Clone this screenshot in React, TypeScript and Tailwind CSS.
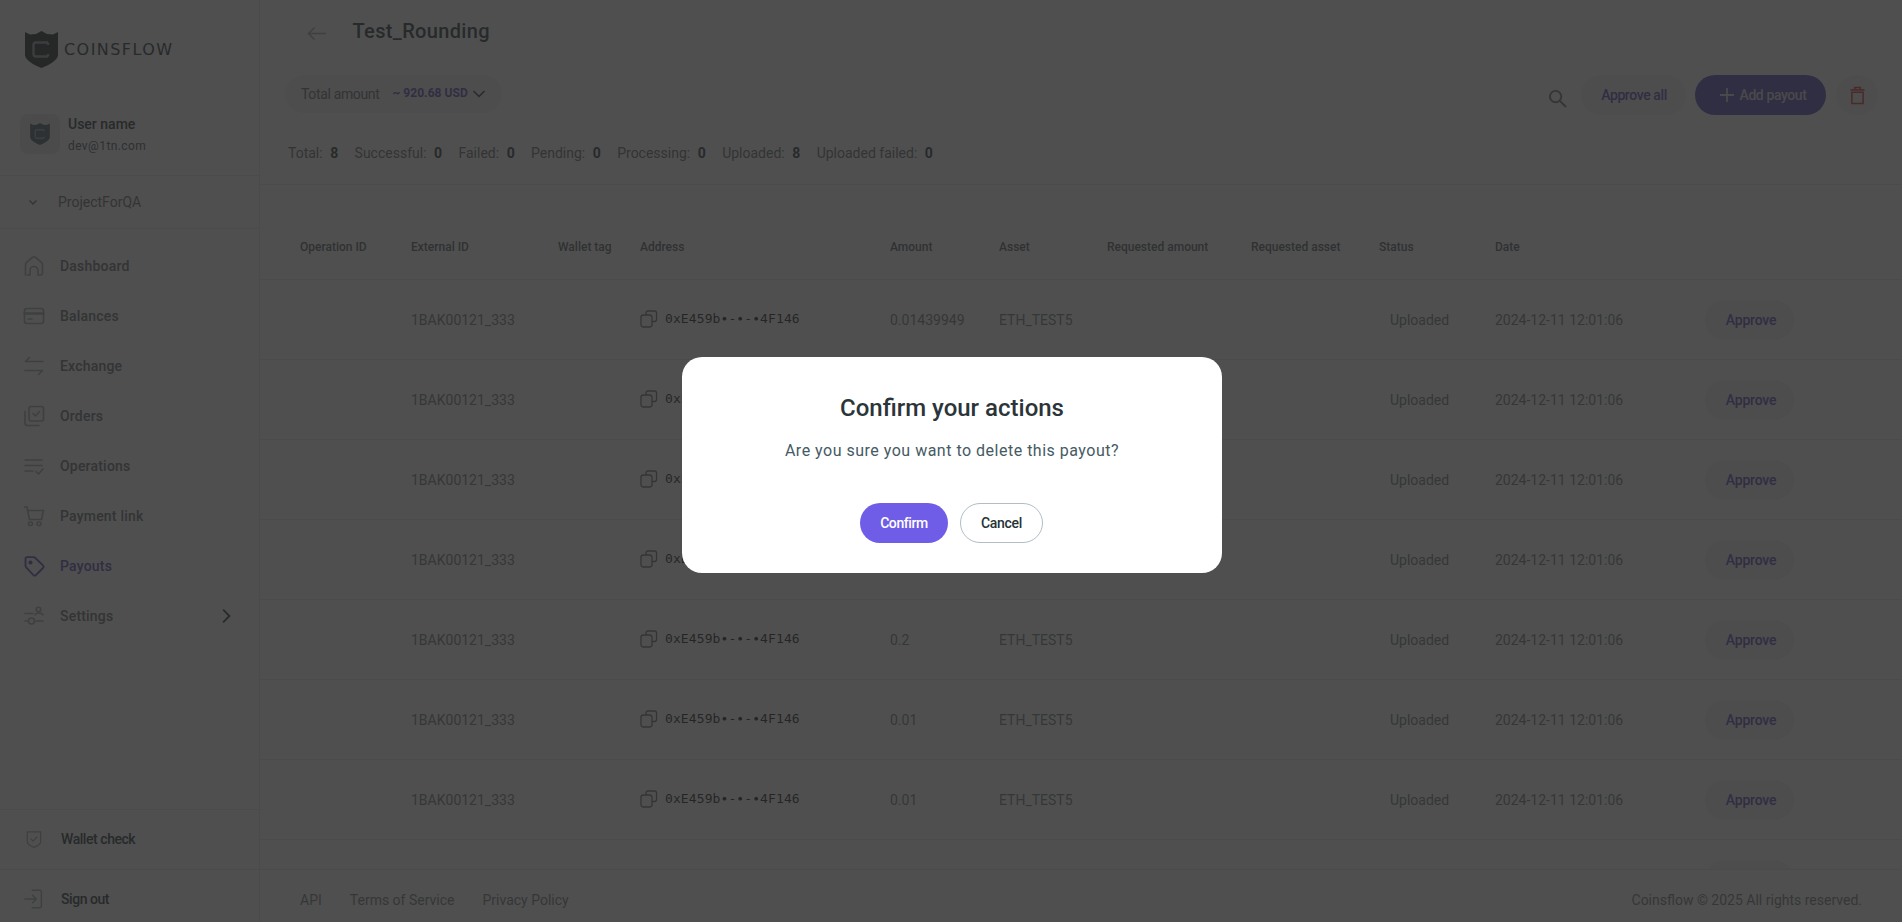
import React from "react";

const P = (props: React.SVGProps<SVGSVGElement> & { s?: number }) => {
  const { s = 24, children, ...r } = props;
  return (
    <svg width={s} height={s} viewBox="0 0 24 24" fill="none" stroke="currentColor" strokeWidth={1.6} strokeLinecap="round" strokeLinejoin="round" {...r}>
      {children}
    </svg>
  );
};

const Shield = ({ w, h, fill, c }: { w: number; h: number; fill: string; c: string }) => (
  <svg width={w} height={h} viewBox="0 0 33 37">
    <path d="M0 1 L5 3.5 L11 3 L16.5 0 L22 3 L28 3.5 L33 1 V24 C33 29 24 34 16.5 37 C9 34 0 29 0 24 Z" fill={fill} />
    <path d="M23 11.500 H11 Q8.500 11.500 8.500 14 V23 Q8.500 25.500 11 25.500 H23 M23 11.500 V14 M23 25.500 V23" fill="none" stroke={c} strokeWidth="2.400" />
  </svg>
);

const nav: [string, React.ReactNode, boolean?][] = [
  ["Dashboard", <P><path d="M3.500 21 V10.500 C3.500 9.500 4 8.800 4.800 8.100 L10.500 3.300 C11.400 2.600 12.600 2.600 13.500 3.300 L19.200 8.100 C20 8.800 20.500 9.500 20.500 10.500 V19 C20.500 20.200 19.700 21 18.500 21 H16 V16.500 C16 14.300 14.200 12.500 12 12.500 C9.800 12.500 8 14.300 8 16.500 V21 H5.500" /></P>],
  ["Balances", <P><rect x="2.500" y="4.500" width="19" height="15" rx="2.500" /><path d="M2.500 9.500 H21.500" strokeWidth="2.400" /><path d="M6 15 H10" /></P>],
  ["Exchange", <P><path d="M7.500 3.500 L3.500 7.500 H21" /><path d="M16.500 20.500 L20.500 16.500 H3" /></P>],
  ["Orders", <P><rect x="7" y="2.500" width="14.500" height="14.500" rx="2" /><path d="M11 9.500 L13.500 12 L17.500 7.500" /><path d="M3 7.500 V19 C3 20.500 3.800 21.500 5.500 21.500 H17" /></P>],
  ["Operations", <P><path d="M3 6 H20 M3 11.500 H20 M3 17 H11" /><path d="M14 17.500 L16.500 20 L21 15" /></P>],
  ["Payment link", <P><path d="M2.500 3 H5 L7.500 15.500 H19.500 L21.500 6.500 H5.800" /><rect x="6.500" y="18" width="4" height="3.500" rx="1.700" /><rect x="15" y="18" width="4" height="3.500" rx="1.700" /></P>],
  ["Payouts", <P><path d="M3.500 5 C3.500 4 4.300 3.200 5.300 3.200 H11.500 C12.200 3.200 12.800 3.500 13.300 4 L21 11.300 C21.800 12.100 21.800 13.300 21 14 L14 21 C13.300 21.700 12.100 21.700 11.300 21 L4.200 13.400 C3.700 12.900 3.500 12.300 3.500 11.600 Z" strokeWidth="1.800" /><circle cx="8.500" cy="8.500" r="1.300" fill="currentColor" /></P>, true],
  ["Settings", <P><path d="M3 9.500 H11 M3 17 H6 M14 17 H21" /><path d="M13 11 C13.500 9.500 14.500 9 16.500 9 C18.500 9 20.500 9.500 21 11" strokeWidth="1.400" /><circle cx="16.500" cy="5.500" r="2.200" /><circle cx="9.500" cy="17" r="3" /></P>],
];

const Btn = ({ children, cls }: { children: React.ReactNode; cls: string }) => (
  <div className={"flex items-center justify-center rounded-full h-10 text-sm font-medium " + cls}>{children}</div>
);

const cols = "grid grid-cols-[111px_147px_82px_250px_109px_108px_144px_128px_116px_210px_1fr] pl-[40px] items-center";
const amounts = ["0.01439949", "0.05", "0.1", "0.3", "0.2", "0.01", "0.01", "0.01"];
const heads = ["Operation ID", "External ID", "Wallet tag", "Address", "Amount", "Asset", "Requested amount", "Requested asset", "Status", "Date"];
const stats: [string, string][] = [["Total", "8"], ["Successful", "0"], ["Failed", "0"], ["Pending", "0"], ["Processing", "0"], ["Uploaded", "8"], ["Uploaded failed", "0"]];

export default function App() {
  return (
    <div className="relative flex h-[922px] w-full overflow-hidden bg-white text-[#263238] text-sm" style={{ fontFamily: "Roboto, sans-serif" }}>
      <aside className="flex w-[260px] shrink-0 flex-col border-r border-[#e4e6e8] bg-[#fbfbfb]">
        <div className="flex h-[114px] items-start gap-[6px] pl-[25px] pt-[31px]">
          <Shield w={33} h={37} fill="#1d2326" c="#8d9a9f" />
          <span className="mt-[8px] text-[16px] leading-[22px] tracking-[1.45px] text-[#263238]" style={{ fontFamily: '"DejaVu Sans", sans-serif', fontWeight: 400 }}>COINSFLOW</span>
        </div>
        <div className="flex h-[62px] items-start gap-2 border-b border-[#e4e6e8] pl-5">
          <div className="flex h-10 w-10 items-center justify-center rounded-lg bg-[#e8e9ea]">
            <Shield w={20} h={22} fill="#455a64" c="#90a4ae" />
          </div>
          <div>
            <div className="text-sm font-medium leading-[20px] text-[#263238]">User name</div>
            <div className="mt-[2px] text-[12px] leading-[20px] tracking-[0.4px] text-[#4a5459]">dev@1tn.com</div>
          </div>
        </div>
        <div className="flex h-[53px] items-center border-b border-[#e4e6e8] pl-[26px] text-[#636b70]">
          <svg width="14" height="14" viewBox="0 0 14 14" fill="none" stroke="currentColor" strokeWidth="1.400"><path d="M3.500 5.500 L7 9 L10.500 5.500" /></svg>
          <span className="ml-[18px]">ProjectForQA</span>
        </div>
        <nav className="flex flex-col pt-[12px]">
          {nav.map(([t, ic, active]) => (
            <div key={t} className={"flex h-[50px] items-center pl-[22px] pr-[25px] " + (active ? "text-[#5648bd]" : "text-[#636b70]")}>
              <span className={active ? "" : "text-[#a0a8ac]"}>{ic}</span>
              <span className="ml-[14px] font-medium tracking-[0.2px]">{t}</span>
              {t === "Settings" && (
                <svg className="ml-auto text-[#263238]" width="16" height="16" viewBox="0 0 14 14" fill="none" stroke="currentColor" strokeWidth="1.600"><path d="M4.500 1.500 L10 7 L4.500 12.500" /></svg>
              )}
            </div>
          ))}
        </nav>
        <div className="mt-auto flex h-[60px] items-center border-t border-[#e4e6e8] pb-[1px] pl-[24px] font-medium tracking-[-0.45px]">
          <P s={20} className="text-[#a0a8ac]"><path d="M4 3.500 H20 V15.500 C20 18 15.500 20.500 12 22 C8.500 20.500 4 18 4 15.500 Z" strokeWidth="1.500" /><path d="M8.500 12 L11 14.500 L15.500 9.500" strokeWidth="1.300" /></P>
          <span className="ml-[17px]">Wallet check</span>
        </div>
        <div className="flex h-[53px] items-center border-t border-[#e4e6e8] pl-[23px] pt-[6px] font-medium tracking-[-0.45px]">
          <P s={22} className="text-[#a0a8ac]"><path d="M10 2.500 H18.500 C19.500 2.500 20 3 20 4 V20 C20 21 19.500 21.500 18.500 21.500 H10" strokeWidth="1.500" /><path d="M2 12 H14 M10.500 8 L14.500 12 L10.500 16" strokeWidth="1.500" /></P>
          <span className="ml-[16px]">Sign out</span>
        </div>
      </aside>

      <main className="flex min-w-0 flex-1 flex-col bg-white">
        <div className="flex h-[62px] items-center pl-[46px] pt-[3px]">
          <svg className="text-[#a0a8ac]" width="22" height="22" viewBox="0 0 22 22" fill="none" stroke="currentColor" strokeWidth="1.500"><path d="M20 11.500 H2.500 M8.500 5.500 L2.500 11.500 L8.500 17.500" /></svg>
          <h1 className="ml-[24.5px] -translate-y-[1px] text-[20px] font-medium tracking-[0.35px] text-[#263238]">Test_Rounding</h1>
        </div>
        <div className="mt-[13px] flex h-[40px] items-start justify-between pl-[25px] pr-[24px]">
          <div className="flex h-[38px] w-[217px] items-center rounded-full bg-[#f1f1f3] pl-[16px]">
            <span className="tracking-[-0.35px] text-[#5f686d]">Total amount</span>
            <span className="ml-[13px] text-[12px] font-bold tracking-[0.05px] text-[#5648bd]">~ 920.68 USD</span>
            <svg className="ml-[3px]" width="16" height="16" viewBox="0 0 16 16" fill="none" stroke="#263238" strokeWidth="1.500"><path d="M2.500 5 L8 10.500 L13.500 5" /></svg>
          </div>
          <div className="flex items-start">
            <svg className="mt-[14px] text-[#6a7074]" width="19" height="19" viewBox="0 0 20 20" fill="none" stroke="currentColor" strokeWidth="2"><circle cx="8" cy="8" r="6" /><path d="M12.500 12.500 L19 19" strokeWidth="2.200" /></svg>
            <Btn cls="ml-[14px] w-[105px] bg-[#f1f1f3] text-[#5648bd] tracking-[-0.4px] pl-[1px]">Approve all</Btn>
            <Btn cls="ml-[9px] w-[131px] bg-[#5648bd] pl-[3px] text-[#dcdce0] tracking-[-0.4px]">
              <svg className="mr-[4px]" width="18" height="18" viewBox="0 0 18 18" fill="none" stroke="currentColor" strokeWidth="1.800"><path d="M9 2 V16 M2 9 H16" /></svg>
              Add payout
            </Btn>
            <div className="ml-[10px] flex h-10 w-[42px] items-center justify-center rounded-full bg-[#f9f3f3] text-[#d63a3a]">
              <svg width="15" height="19" viewBox="0 0 16 20" fill="none" stroke="currentColor" strokeWidth="1.700"><path d="M0.500 4 H15.500" /><path d="M5 3.500 V1.500 H11 V3.500" /><path d="M2 6.500 V18.500 H14 V6.500 Z" /></svg>
            </div>
          </div>
        </div>
        <div className="flex h-[70px] items-start gap-[16.4px] border-b border-[#e4e6e8] pl-[28px] pt-[28px] leading-[20px] text-[#5f686d]">
          {stats.map(([l, v]) => (
            <div key={l} className="flex gap-[7.5px]">
              <span>{l}:</span>
              <span className="font-bold text-[#263238]">{v}</span>
            </div>
          ))}
        </div>
        <div className="min-h-0 flex-1 overflow-hidden">
          <div className={cols + " h-[95px] border-b border-[#e4e6e8] pt-[32px] text-[12px] font-medium text-[#525a5f]"}>
            {heads.map((h) => <div key={h}>{h}</div>)}
            <div />
          </div>
          {amounts.map((a, i) => (
            <div key={i} className={cols + " h-[80px] border-b border-[#e4e6e8] text-[#70787c]"}>
              <div />
              <div>1BAK00121_333</div>
              <div />
              <div className="flex items-center gap-[7px]">
                <svg className="-translate-y-[1px] text-[#636b70]" width="18" height="18" viewBox="0 0 18 18" fill="none" stroke="currentColor" strokeWidth="1.300"><rect x="1" y="5" width="11" height="12" rx="2.500" /><path d="M6 5 V3 C6 1.800 6.800 1 8 1 H14.500 C15.700 1 16.500 1.800 16.500 3 V9.500 C16.500 10.800 15.700 11.500 14.500 11.500 H12" /></svg>
                <span className="text-[13px] tracking-[0.1px] text-[#141a1d]" style={{ fontFamily: '"DejaVu Sans Mono", monospace' }}>0xE459b∙-∙-∙4F146</span>
              </div>
              <div>{a}</div>
              <div>ETH_TEST5</div>
              <div />
              <div />
              <div className="pl-[11px]">Uploaded</div>
              <div>2024-12-11 12:01:06</div>
              <div className="flex h-10 w-[89px] items-center justify-center rounded-full bg-[#f1f1f3] pl-[3px] font-medium tracking-[-0.2px] text-[#5648bd]">Approve</div>
            </div>
          ))}
        </div>
        <footer className="flex h-[53px] shrink-0 items-center justify-between border-t border-[#e4e6e8] bg-white pl-[40px] pr-[40px] pt-[7px] text-[#70787c]">
          <div className="flex gap-[28px]">
            <span>API</span><span>Terms of Service</span><span>Privacy Policy</span>
          </div>
          <span>Coinsflow © 2025 All rights reserved.</span>
        </footer>
      </main>

      <div className="absolute inset-0 bg-[rgba(40,40,40,0.82)]">
        <div className="absolute left-[682px] top-[357px] flex h-[216px] w-[540px] flex-col items-center rounded-[20px] bg-white pt-[33px]">
          <h2 className="text-[24px] font-medium leading-[36px] text-[#2b3539]">Confirm your actions</h2>
          <p className="mt-[13px] text-[16px] leading-[24px] tracking-[0.5px] text-[#455a64]">Are you sure you want to delete this payout?</p>
          <div className="mt-[40px] -ml-[2px] flex gap-3">
            <Btn cls="w-[88px] bg-[#6f5de7] pb-[1px] pl-[1px] text-white font-bold tracking-[-0.4px]">Confirm</Btn>
            <Btn cls="w-[83px] border border-[#b0bec5] pb-[1px] pl-[1px] text-[#263238] tracking-[-0.3px]">Cancel</Btn>
          </div>
        </div>
      </div>
    </div>
  );
}
